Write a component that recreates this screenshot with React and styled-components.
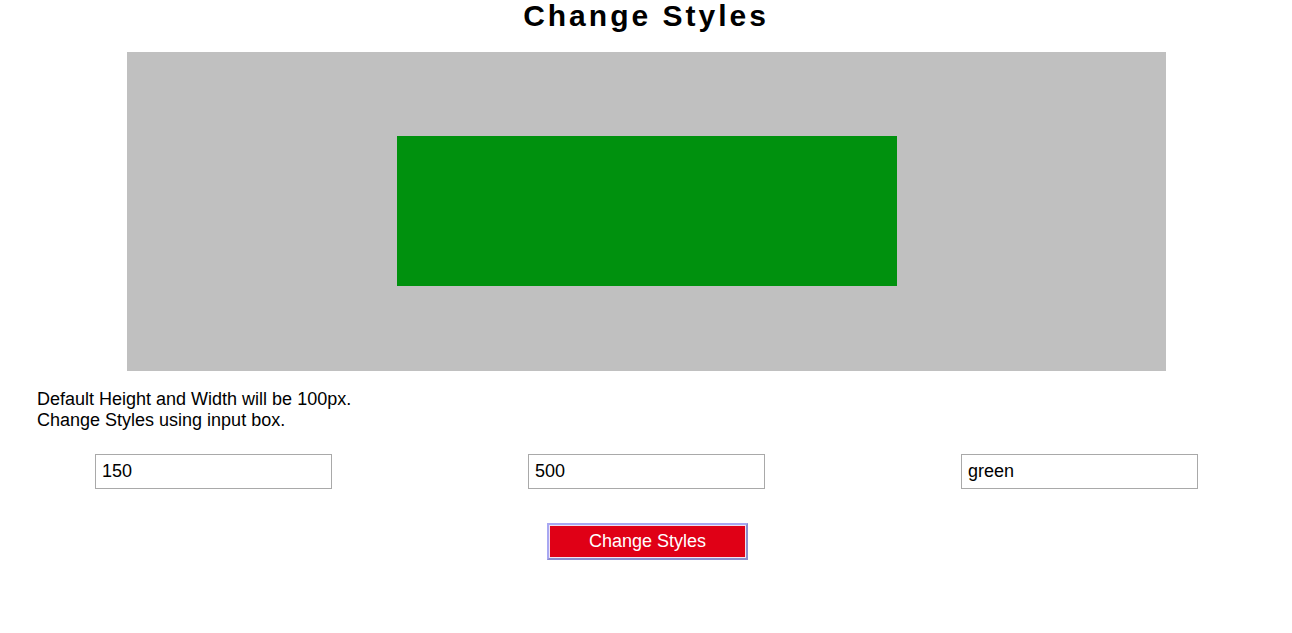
import React, { useState } from 'react'
import styled, { createGlobalStyle } from 'styled-components'

const GlobalStyle = createGlobalStyle`
  body {
    margin: 0;
    font-family: "Liberation Sans", Arial, sans-serif;
    background: #fff;
    color: #000;
  }
`

const Page = styled.div`
  display: flex;
  flex-direction: column;
  width: 1292px;
`

const Title = styled.h1`
  margin: 0;
  height: 52px;
  text-align: center;
  font-size: 30px;
  line-height: 31px;
  font-weight: bold;
  letter-spacing: 3px;
`

const Stage = styled.div`
  box-sizing: border-box;
  margin-left: 127px;
  width: 1039px;
  height: 319px;
  padding: 0 0 1px 1px;
  background: #c0c0c0;
  display: flex;
  align-items: center;
  justify-content: center;
`

const Shape = styled.div`
  background: ${p => p.$color};
`

const Notes = styled.p`
  margin: 18px 0 0 37px;
  font-size: 18px;
  line-height: 21px;
`

const Fields = styled.div`
  display: flex;
  justify-content: center;
  gap: 196px;
  margin-top: 23px;
  padding-left: 1px;
`

const Field = styled.input`
  box-sizing: border-box;
  width: 237px;
  height: 35px;
  border: 1px solid #a9a9a9;
  padding: 0 6px;
  font-family: "Liberation Sans", Arial, sans-serif;
  font-size: 18px;
  color: #000;
  outline: none;
`

const Actions = styled.div`
  display: flex;
  justify-content: center;
  margin-top: 34px;
  padding-left: 3px;
`

const Button = styled.button`
  box-sizing: border-box;
  width: 201px;
  height: 37px;
  padding: 0;
  background: #e00016;
  color: #fff;
  border: 2px solid;
  border-color: #a8a8f2 #8c8ccc #8c8ccc #a8a8f2;
  box-shadow: inset 0 0 0 1px #f0e4f0;
  font-family: "Liberation Sans", Arial, sans-serif;
  font-size: 18px;
  cursor: pointer;
`

export default function App() {
  const [height, setHeight] = useState('150')
  const [width, setWidth] = useState('500')
  const [color, setColor] = useState('green')
  const [style, setStyle] = useState({ height: 150, width: 500, color: '#00910e' })

  const apply = () => {
    setStyle({
      height: parseInt(height, 10) || 100,
      width: parseInt(width, 10) || 100,
      color: color === 'green' ? '#00910e' : color,
    })
  }

  return (
    <Page>
      <GlobalStyle />
      <Title>Change Styles</Title>
      <Stage>
        <Shape $color={style.color} style={{ width: style.width, height: style.height }} />
      </Stage>
      <Notes>
        Default Height and Width will be 100px.
        <br />
        Change Styles using input box.
      </Notes>
      <Fields>
        <Field value={height} onChange={e => setHeight(e.target.value)} />
        <Field value={width} onChange={e => setWidth(e.target.value)} />
        <Field value={color} onChange={e => setColor(e.target.value)} />
      </Fields>
      <Actions>
        <Button onClick={apply}>Change Styles</Button>
      </Actions>
    </Page>
  )
}
